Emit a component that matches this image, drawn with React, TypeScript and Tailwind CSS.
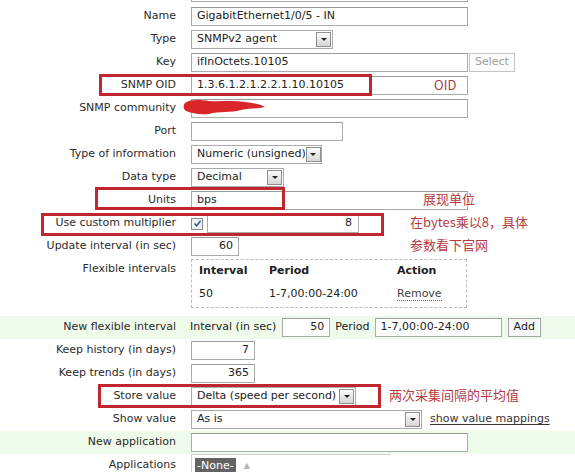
import React from 'react';

const Row = ({
  label,
  children,
  green,
}: {
  label: string;
  children?: React.ReactNode;
  green?: boolean;
}) => (
  <div className={`flex items-center h-[23px] ${green ? 'bg-[#effbea]' : ''}`}>
    <div className="w-[176px] shrink-0 text-right text-[#2b2b2b] whitespace-nowrap">{label}</div>
    <div className="ml-[15px] flex items-center">{children}</div>
  </div>
);

const Input = ({
  w,
  value,
  right,
}: {
  w: string;
  value?: string;
  right?: boolean;
}) => (
  <div
    className={`${w} h-[19px] border border-[#ababab] border-t-[#9a9a9a] bg-white px-[5px] flex items-center text-[#222] whitespace-nowrap overflow-hidden ${right ? 'justify-end' : ''}`}
  >
    {value}
  </div>
);

const Arrow = () => (
  <div className="w-[15px] h-[15px] mr-[1px] shrink-0 border border-[#8f8f8f] bg-gradient-to-b from-[#fbfbfb] to-[#d6d6d6] flex items-center justify-center">
    <div className="w-0 h-0 border-l-[3px] border-r-[3px] border-t-[3px] border-l-transparent border-r-transparent border-t-[#222]" />
  </div>
);

const Select = ({ w, value }: { w: string; value: string }) => (
  <div className={`${w} h-[19px] border border-[#ababab] bg-white pl-[5px] flex items-center justify-between text-[#222] whitespace-nowrap`}>
    <span>{value}</span>
    <Arrow />
  </div>
);

const Btn = ({ label, disabled }: { label: string; disabled?: boolean }) => (
  <div
    className={`h-[19px] px-[5px] border flex items-center ${
      disabled ? 'border-[#c4c4c4] text-[#a0a0a0] bg-[#fbfbfb]' : 'border-[#a5a5a5] text-[#222] bg-[#f7f7f7]'
    }`}
  >
    {label}
  </div>
);

const RedBox = ({ cls }: { cls: string }) => (
  <div className={`absolute border-[3px] border-[#c1262e] pointer-events-none ${cls}`} />
);

const Note = ({ cls, children }: { cls: string; children: React.ReactNode }) => (
  <div
    className={`absolute text-[13px] leading-[18px] text-[#b43a3f] whitespace-nowrap font-['Noto_Sans_CJK_SC','Noto_Sans',sans-serif] ${cls}`}
  >
    {children}
  </div>
);

export default function App() {
  return (
    <div className="relative w-[575px] h-[472px] overflow-hidden bg-white text-[11px] font-['Tahoma','DejaVu_Sans',sans-serif]">
      <div className="h-[5px]">
        <div className="ml-[191px] w-[277px] h-[2px] border-b border-x border-[#ababab]" />
      </div>

      <Row label="Name">
        <Input w="w-[277px]" value="GigabitEthernet1/0/5 - IN" />
      </Row>
      <Row label="Type">
        <Select w="w-[142px]" value="SNMPv2 agent" />
      </Row>
      <Row label="Key">
        <Input w="w-[277px]" value="ifInOctets.10105" />
        <div className="ml-[1px]">
          <Btn label="Select" disabled />
        </div>
      </Row>
      <Row label="SNMP OID">
        <Input w="w-[277px]" value="1.3.6.1.2.1.2.2.1.10.10105" />
      </Row>
      <Row label="SNMP community">
        <Input w="w-[277px]" />
      </Row>
      <Row label="Port">
        <Input w="w-[152px]" />
      </Row>
      <Row label="Type of information">
        <Select w="w-[131px]" value="Numeric (unsigned)" />
      </Row>
      <Row label="Data type">
        <Select w="w-[93px]" value="Decimal" />
      </Row>
      <Row label="Units">
        <Input w="w-[277px]" value="bps" />
      </Row>
      <Row label="Use custom multiplier">
        <div className="w-[12px] h-[12px] border border-[#8a8a8a] bg-[#eef2f7] flex items-center justify-center mr-[4px]">
          <svg width="9" height="9" viewBox="0 0 9 9">
            <path d="M1.5 4.5 L3.7 6.8 L7.6 1.8" fill="none" stroke="#3b5a8c" strokeWidth="1.6" />
          </svg>
        </div>
        <div className="w-[152px] h-[19px] border border-[#ababab] bg-white pr-[6px] flex items-center justify-end text-[#222]">8</div>
      </Row>
      <Row label="Update interval (in sec)">
        <Input w="w-[48px]" value="60" right />
      </Row>

      <div className="flex items-start h-[58px]">
        <div className="w-[176px] shrink-0 text-right text-[#2b2b2b] mt-[4px] leading-[14px]">Flexible intervals</div>
        <div className="ml-[15px] mt-[1px] w-[276px] h-[49px] border border-dashed border-[#bdbdbd] pl-[7px] text-[#222]">
          <div className="grid grid-cols-[70px_128px_1fr] h-[23px] items-center font-bold">
            <span>Interval</span>
            <span>Period</span>
            <span>Action</span>
          </div>
          <div className="grid grid-cols-[70px_128px_1fr] h-[22px] items-center">
            <span>50</span>
            <span>1-7,00:00-24:00</span>
            <span>
              <span className="text-[#444] border-b border-dotted border-[#666]">Remove</span>
            </span>
          </div>
        </div>
      </div>

      <div className="flex items-center h-[23px] bg-[#effbea]">
        <div className="w-[176px] shrink-0 text-right text-[#2b2b2b]">New flexible interval</div>
        <div className="ml-[14px] flex items-center text-[#222]">
          <span>Interval (in sec)</span>
          <div className="ml-[6px]">
            <Input w="w-[48px]" value="50" right />
          </div>
          <span className="ml-[5px]">Period</span>
          <div className="ml-[5px]">
            <Input w="w-[127px]" value="1-7,00:00-24:00" />
          </div>
          <div className="ml-[6px]">
            <Btn label="Add" />
          </div>
        </div>
      </div>

      <Row label="Keep history (in days)">
        <Input w="w-[64px]" value="7" right />
      </Row>
      <Row label="Keep trends (in days)">
        <Input w="w-[64px]" value="365" right />
      </Row>
      <Row label="Store value">
        <Select w="w-[165px]" value="Delta (speed per second)" />
      </Row>
      <Row label="Show value">
        <Select w="w-[231px]" value="As is" />
        <span className="ml-[8px] text-[#333] underline underline-offset-2">show value mappings</span>
      </Row>
      <Row label="New application" green>
        <Input w="w-[277px]" />
      </Row>
      <Row label="Applications">
        <div className="w-[200px] h-[23px] pt-[3px] pl-[3px] flex items-start border-l border-t border-[#d0d0d0]">
          <span className="bg-[#636363] text-white px-[2px] h-[16px] leading-[16px]">-None-</span>
          <span className="ml-[8px] text-[8px] text-[#b5b5b5] leading-[16px]">▲</span>
        </div>
      </Row>

      {/* scribbled-out community string */}
      <svg className="absolute left-[183px] top-[98px]" width="84" height="18" viewBox="0 0 84 18">
        <path
          d="M2 5 C8 1 16 2 26 3 C38 4 50 2 62 4 C70 5 77 6 82 9 C75 11 67 10 58 12 C48 15 36 13 26 16 C16 17 8 15 3 13 C0 11 0 7 2 5 Z"
          fill="#d8262b"
        />
      </svg>

      {/* annotations */}
      <RedBox cls="left-[99px] top-[74px] w-[273px] h-[22px]" />
      <RedBox cls="left-[95px] top-[187px] w-[190px] h-[23px]" />
      <RedBox cls="left-[41px] top-[213px] w-[343px] h-[23px]" />
      <RedBox cls="left-[98px] top-[384px] w-[283px] h-[24px]" />

      <Note cls="left-[434px] top-[76px] font-['DejaVu_Sans',sans-serif]">OID</Note>
      <Note cls="left-[423px] top-[190px]">展现单位</Note>
      <Note cls="left-[410px] top-[213px]">在bytes乘以8，具体</Note>
      <Note cls="left-[410px] top-[236px]">参数看下官网</Note>
      <Note cls="left-[389px] top-[386px]">两次采集间隔的平均值</Note>
    </div>
  );
}
